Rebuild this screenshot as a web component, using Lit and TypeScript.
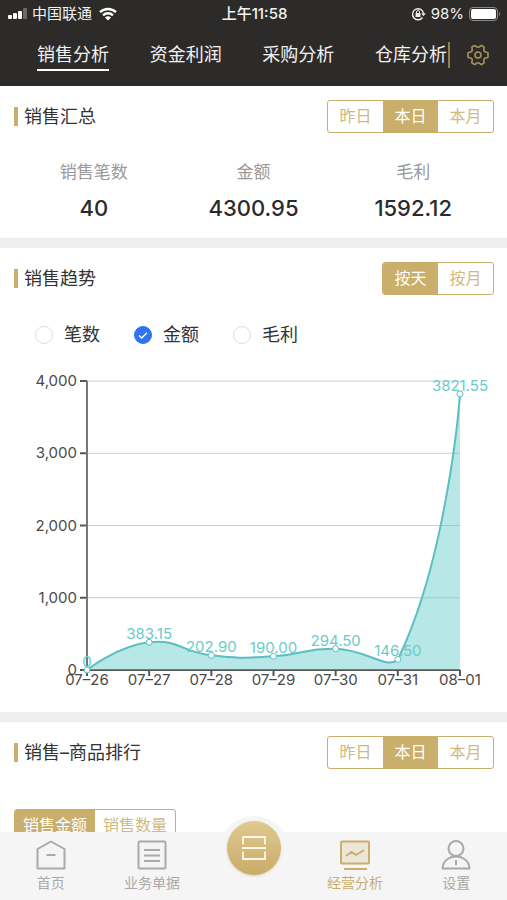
import { LitElement, html, svg, css } from "lit";
import { customElement, property, state } from "lit/decorators.js";
import { classMap } from "lit/directives/class-map.js";

const resets = css`
  * { box-sizing: border-box; }
  button { font: inherit; color: inherit; background: none; border: 0; padding: 0; margin: 0; cursor: pointer; }
  svg { display: block; }
`;

/** Row of joined buttons, one of them selected. */
@customElement("segment-group")
export class SegmentGroup extends LitElement {
  @property({ attribute: false }) options: string[] = [];
  @property({ type: Number }) selected = 0;
  static styles = [resets, css`
    :host { display: inline-flex; }
    .group { display: flex; height: 33px; border: 1px solid #c9ae6c; border-radius: 3px; overflow: hidden; background: #fff; }
    .option { min-width: 55px; padding: 0 8px 2px; font-size: 16px; line-height: 24px; color: #d0b980; white-space: nowrap; }
    .option.on { background: #c9ae6c; color: #fff; }
  `];
  render() {
    return html`<div class="group" role="group">
      ${this.options.map((o, i) => html`<button
        class=${classMap({ option: true, on: i === this.selected })}
        aria-pressed=${i === this.selected}
        @click=${() => (this.selected = i)}>${o}</button>`)}
    </div>`;
  }
}

type Point = [number, number];

/** Smoothed area chart with value labels. */
@customElement("trend-chart")
export class TrendChart extends LitElement {
  @property({ attribute: false }) days: string[] = [];
  @property({ attribute: false }) values: string[] = [];
  static styles = [resets, css`
    :host { display: block; }
    .chart { width: 100%; height: auto; font-family: Inter, "Liberation Sans", sans-serif; }
    .grid { stroke: #ccc; stroke-width: 1; }
    .axis { stroke: #555; stroke-width: 2; fill: none; }
    .side { stroke: #777; }
    .tick { font-size: 15px; fill: #4a4a4a; }
    .value { font-size: 15px; fill: #6accca; text-anchor: middle; }
    .end { text-anchor: end; }
    .mid { text-anchor: middle; }
    .area { fill: #5cc9c6; fill-opacity: 0.44; }
    .line { fill: none; stroke: #5bbfc2; stroke-width: 2; }
    .dot { fill: #fff; stroke: #5bbfc2; stroke-width: 1; }
  `];

  private curve(pts: Point[], floor: number, ceil: number) {
    const clamp = (y: number) => Math.min(floor, Math.max(ceil, y));
    let d = `M${pts[0][0]} ${pts[0][1]}`;
    let out: Point = pts[0];
    for (let i = 1; i < pts.length; i++) {
      const p = pts[i];
      let into: Point = p;
      let next: Point = p;
      if (i < pts.length - 1) {
        const a = pts[i - 1];
        const b = pts[i + 1];
        const la = Math.hypot(p[0] - a[0], p[1] - a[1]);
        const lb = Math.hypot(b[0] - p[0], b[1] - p[1]);
        const r = lb / (la + lb);
        const vx = (b[0] - a[0]) / 2;
        const vy = (b[1] - a[1]) / 2;
        into = [p[0] - vx * (1 - r), clamp(p[1] - vy * (1 - r))];
        next = [p[0] + vx * r, clamp(p[1] + vy * r)];
      }
      d += ` C${out[0]} ${out[1]} ${into[0]} ${into[1]} ${p[0]} ${p[1]}`;
      out = next;
    }
    return d;
  }

  render() {
    const left = 87, right = 460, top = 21, base = 310;
    const step = (right - left) / (this.days.length - 1);
    const y = (v: number) => base - (v / 4000) * (base - top);
    const pts = this.values.map((v, i): Point => [left + i * step, y(Number(v))]);
    const line = this.curve(pts, base, Math.min(...pts.map((p) => p[1])));
    return html`<svg class="chart" viewBox="0 0 507 352" role="img" aria-label="销售趋势">
      ${[0, 1000, 2000, 3000, 4000].map((v) => svg`
        ${v ? svg`<line class="grid" x1=${left} x2=${right} y1=${y(v)} y2=${y(v)} />` : ""}
        <line class="axis" x1=${left - 7} x2=${left} y1=${y(v)} y2=${y(v)} />
        <text class="tick end" x="77" y=${y(v) + 5}>${v.toLocaleString("en-US")}</text>`)}
      <path class="axis side" d="M${left} ${top}V${base}" />
      <path class="axis" d="M${left} ${base}H${right}" />
      ${pts.map((p, i) => svg`
        <line class="axis" x1=${p[0]} x2=${p[0]} y1=${base} y2=${base + 6} />
        <text class="tick mid" x=${p[0]} y=${base + 15}>${this.days[i]}</text>`)}
      <path class="area" d="${line} V${base} H${left} Z" />
      <path class="line" d=${line} />
      ${pts.map((p, i) => svg`
        <circle class="dot" cx=${p[0]} cy=${p[1]} r="3" />
        <text class="value" x=${p[0]} y=${p[1] - 3}>${this.values[i]}</text>`)}
    </svg>`;
  }
}

const icons = {
  home: svg`<path d="M15 1.500 28.500 9V28.500H1.500V9Z" /><path d="M10.500 15H19.500" />`,
  bills: svg`<rect x="1.500" y="1.500" width="27" height="27" rx="1" /><path d="M7 10H23M7 15.500H23M7 21H23" />`,
  stats: svg`<rect class="tint" x="1" y="1.500" width="28" height="22" rx="1" /><path d="M6 16 11.500 12 16 15 24 10" /><path d="M4 29H27" />`,
  person: svg`<circle cx="15" cy="8.500" r="7.500" /><path d="M1.500 28.500C2 20 9 16.500 15 16.500S28 20 28.500 28.500ZM15 20V25" />`,
};

@customElement("app-root")
export class AppRoot extends LitElement {
  @state() private tab = 0;
  @state() private metric = 1;

  static styles = [resets, css`
    :host { display: block; font-family: Inter, "Noto Sans CJK SC", sans-serif; color: #333; }
    .shell { display: flex; flex-direction: column; height: 100vh; background: #fff; }
    .top { flex: none; background: #2d2b29; color: #f2f2f2; }
    .status { display: grid; grid-template-columns: 1fr auto 1fr; align-items: center; height: 28px; padding: 0 6px 0 8px; font-size: 15px; line-height: 20px; }
    .side { display: flex; align-items: center; gap: 5px; }
    .power { justify-content: flex-end; }
    .clock { font-weight: 500; }
    .tabs { display: flex; align-items: center; height: 58px; padding: 0 18px 4px 37px; }
    .names { flex: 1; display: flex; justify-content: space-between; padding-right: 1px; }
    .tab { font-size: 18px; line-height: 32px; height: 32px; border-bottom: 2px solid transparent; white-space: nowrap; }
    .tab.on { border-color: #fff; }
    .gear { display: flex; align-items: center; height: 26px; padding-left: 17px; border-left: 2px solid #94804f; }

    .body { flex: 1; min-height: 0; overflow-y: auto; scrollbar-width: none; background: #efefef; display: flex; flex-direction: column; gap: 10px; }
    .card { flex: none; background: #fff; }
    .head { display: flex; align-items: center; justify-content: space-between; padding: 14px 13px 0 14px; }
    .title { margin: 0; padding-left: 6px; font-size: 18px; line-height: 26px; font-weight: 400; }
    .heading { display: flex; align-items: center; }
    .mark { width: 4px; height: 19px; background: #c9ae6c; }

    .totals { display: grid; grid-template-columns: repeat(3, 1fr); margin: 0; padding: 26px 14px 14px; text-align: center; }
    .label { font-size: 17px; line-height: 26px; color: #999; }
    .number { margin: 0; padding-top: 7px; font-size: 22px; line-height: 32px; font-weight: 500; color: #2b2b2b; }

    .metrics { display: flex; gap: 34px; padding: 26px 35px 12px; }
    .metric { display: flex; align-items: center; gap: 11px; font-size: 18px; line-height: 27px; }
    .pick { display: grid; }
    .pick > * { grid-area: 1 / 1; }
    .radio { appearance: none; width: 18px; height: 18px; margin: 0; border: 1px solid #ddd; border-radius: 50%; background: #fff; }
    .radio:checked { border-color: #2f73f0; background: #2f73f0; }
    .check { pointer-events: none; }

    .ranking { padding: 40px 14px; display: flex; }

    .nav { flex: none; position: relative; display: grid; grid-template-columns: repeat(5, 1fr); height: 68px; background: #f5f5f5; }
    .item { display: flex; flex-direction: column; align-items: center; padding-top: 8px; gap: 2px; color: #aaa; font-size: 14px; line-height: 22px; text-decoration: none; white-space: nowrap; }
    .item.on { color: #c9ae6c; }
    .icon { fill: none; stroke: currentColor; stroke-width: 2; stroke-linejoin: round; }
    .tint { fill: #ece6d6; }
    .bump { position: absolute; left: 50%; top: -16px; width: 72px; height: 72px; margin-left: -36px; border-radius: 50%; background: #f5f5f5; display: flex; justify-content: center; align-items: flex-start; padding-top: 5px; }
    .scan { width: 54px; height: 54px; border-radius: 50%; background: linear-gradient(#e0c98f, #c8ac69); display: flex; align-items: center; justify-content: center; box-shadow: 0 1px 2px #c9ae6c80; }
  `];

  render() {
    const period = ["昨日", "本日", "本月"];
    const item = (name: string, icon: unknown, on = false) => html`
      <a class=${classMap({ item: true, on })} href="#">
        <svg class="icon" width="30" height="30" viewBox="0 0 30 30" aria-hidden="true">${icon}</svg>${name}</a>`;
    const heading = (t: string) => html`<div class="heading"><span class="mark"></span><h2 class="title">${t}</h2></div>`;
    return html`<div class="shell">
      <header class="top">
        <div class="status">
          <div class="side">
            <svg width="19" height="12" viewBox="0 0 19 12" fill="#fff" aria-hidden="true">
              <rect y="7" width="4" height="4" rx="1" /><rect x="5" y="5" width="4" height="6" rx="1" />
              <rect x="10" y="3" width="4" height="8" rx="1" /><rect x="15" width="4" height="11" rx="1" fill="#6b6967" />
            </svg>
            <span>中国联通</span>
            <svg width="22" height="14" viewBox="0 0 22 14" fill="none" stroke="#fff" stroke-width="2.400" aria-hidden="true">
              <path d="M3 5.200A11.500 11.500 0 0 1 19 5.200M6 8.400A7 7 0 0 1 16 8.400" /><path d="M11 13.500 8 10.600A4.400 4.400 0 0 1 14 10.600Z" fill="#fff" stroke="none" />
            </svg>
          </div>
          <span class="clock">上午11:58</span>
          <div class="side power">
            <svg width="15" height="14" viewBox="0 0 15 14" fill="none" stroke="#eee" stroke-width="1.400" aria-hidden="true">
              <path d="M11.500 10.500A5.500 5.500 0 1 1 12.500 6.500" /><path d="M10.200 6.300H14.800L12.500 9.300Z" fill="#eee" stroke="none" />
              <rect x="4.500" y="6" width="5" height="4" fill="#eee" stroke="none" /><path d="M5.500 6.500V5A1.500 1.500 0 0 1 8.500 5V6.500" stroke-width="1" />
            </svg>
            <span>98%</span>
            <svg width="32" height="14" viewBox="0 0 32 14" aria-hidden="true">
              <rect x="0.500" y="0.500" width="28" height="13" rx="3.500" fill="none" stroke="#8b8987" /><rect x="2" y="2" width="25" height="10" rx="2" fill="#fff" />
              <path d="M30 4.500Q32 7 30 9.500Z" fill="#8b8987" />
            </svg>
          </div>
        </div>
        <nav class="tabs">
          <div class="names">
            ${["销售分析", "资金利润", "采购分析", "仓库分析"].map((t, i) => html`<button
              class=${classMap({ tab: true, on: i === this.tab })} @click=${() => (this.tab = i)}>${t}</button>`)}
          </div>
          <button class="gear" aria-label="设置">
            <svg width="22" height="22" viewBox="0 0 22 22" fill="none" stroke="#a8925c" stroke-width="1.600" stroke-linejoin="round" aria-hidden="true">
              <path d="M7.500 1.500C8.500 1 9 3.200 11 3.200S13.500 1 14.500 1.500L17 3C17.800 3.800 16 5.300 17 7S20.800 7.800 21 9V13C20.800 14.200 18 13.300 17 15S17.800 18.200 17 19L14.500 20.500C13.500 21 13 18.800 11 18.800S8.500 21 7.500 20.500L5 19C4.200 18.200 6 16.700 5 15S1.200 14.200 1 13V9C1.200 7.800 4 8.700 5 7S4.200 3.800 5 3Z" />
              <circle cx="11" cy="11" r="3" />
            </svg>
          </button>
        </nav>
      </header>

      <main class="body">
        <section class="card">
          <div class="head">${heading("销售汇总")}<segment-group .options=${period} .selected=${1}></segment-group></div>
          <dl class="totals">
            ${[["销售笔数", "40"], ["金额", "4300.95"], ["毛利", "1592.12"]].map(([k, v]) => html`
              <div><dt class="label">${k}</dt><dd class="number">${v}</dd></div>`)}
          </dl>
        </section>

        <section class="card">
          <div class="head">${heading("销售趋势")}<segment-group .options=${["按天", "按月"]}></segment-group></div>
          <div class="metrics">
            ${["笔数", "金额", "毛利"].map((m, i) => html`<label class="metric">
              <span class="pick">
                <input class="radio" type="radio" name="metric" .checked=${i === this.metric} @change=${() => (this.metric = i)} />
                ${i === this.metric ? html`<svg class="check" width="18" height="18" viewBox="0 0 18 18" fill="none" stroke="#fff" stroke-width="1.300" aria-hidden="true"><path d="M5 9.500 7.700 12 13 6.700" /></svg>` : ""}
              </span>${m}</label>`)}
          </div>
          <trend-chart
            .days=${["07–26", "07–27", "07–28", "07–29", "07–30", "07–31", "08–01"]}
            .values=${["0", "383.15", "202.90", "190.00", "294.50", "146.50", "3821.55"]}></trend-chart>
        </section>

        <section class="card">
          <div class="head">${heading("销售–商品排行")}<segment-group .options=${period} .selected=${1}></segment-group></div>
          <div class="ranking"><segment-group .options=${["销售金额", "销售数量"]}></segment-group></div>
        </section>
      </main>

      <nav class="nav">
        <div class="bump"><button class="scan" aria-label="扫码">
          <svg width="26" height="26" viewBox="0 0 26 26" fill="none" stroke="#fff8e6" stroke-width="1.800" aria-hidden="true">
            <path d="M2 9.500V2H24V9.500M2 16.500V24H24V16.500M1 13H25" />
          </svg></button></div>
        ${item("首页", icons.home)}
        ${item("业务单据", icons.bills)}
        <span></span>
        ${item("经营分析", icons.stats, true)}
        ${item("设置", icons.person)}
      </nav>
    </div>`;
  }
}
